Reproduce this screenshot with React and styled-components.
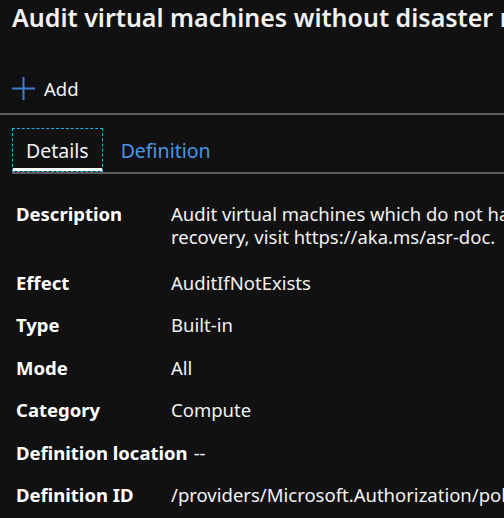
import React from "react";
import styled, { createGlobalStyle } from "styled-components";

const Global = createGlobalStyle`
  html, body { margin: 0; padding: 0; background: #111111; }
  body { font-family: "Segoe UI", "Noto Sans", "Open Sans", sans-serif; color: #ffffff; overflow: hidden; }
`;

const Page = styled.div`
  width: 504px;
  height: 518px;
  overflow: hidden;
  background: #111111;
`;

const Title = styled.h1`
  margin: 0;
  padding: 0 0 0 12px;
  font-size: 25px;
  font-weight: 600;
  line-height: 34px;
  white-space: nowrap;
  color: #f2f2f2;
`;

const Toolbar = styled.div`
  display: flex;
  align-items: center;
  height: 44px;
  margin-top: 35px;
  padding-left: 12px;
  border-bottom: 2px solid #5c5c5c;
`;

const ToolButton = styled.button`
  display: flex;
  align-items: center;
  gap: 9px;
  background: none;
  border: none;
  padding: 0;
  color: #f2f2f2;
  font: inherit;
  font-size: 18.5px;
  margin-top: -6px;
`;

const Tabs = styled.div`
  display: flex;
  margin: 13px 0 0 12px;
  border-bottom: 2px solid #5c5c5c;
`;

const Tab = styled.div`
  position: relative;
  height: 44px;
  display: flex;
  align-items: center;
  padding: 0 ${(p) => (p.$active ? "14px" : "4px")};
  font-size: 19.5px;
  color: ${(p) => (p.$active ? "#f2f2f2" : "#4a96e8")};
  box-sizing: border-box;
  outline: ${(p) => (p.$active ? "1px dashed #1fb2e8" : "none")};
  outline-offset: -1px;
  margin-right: 14px;
  &::after {
    content: "";
    display: ${(p) => (p.$active ? "block" : "none")};
    position: absolute;
    left: 1px;
    right: 1px;
    bottom: 1px;
    height: 3px;
    background: #ffffff;
  }
`;

const Details = styled.div`
  display: flex;
  flex-direction: column;
  margin: 28px 0 0 16px;
  gap: 19.5px;
  font-size: 18.5px;
  line-height: 23px;
`;

const Row = styled.div`
  display: flex;
  padding-bottom: ${(p) => (p.$multi ? "3px" : "0")};
`;

const Label = styled.div`
  flex: none;
  min-width: 149px;
  padding-right: 6px;
  font-weight: 700;
  color: #ffffff;
  white-space: nowrap;
`;

const Value = styled.div`
  color: #f2f2f2;
  white-space: nowrap;
`;

const rows = [
  ["Description", ["Audit virtual machines which do not have disaster", "recovery, visit https://aka.ms/asr-doc."]],
  ["Effect", ["AuditIfNotExists"]],
  ["Type", ["Built-in"]],
  ["Mode", ["All"]],
  ["Category", ["Compute"]],
  ["Definition location", ["--"]],
  ["Definition ID", ["/providers/Microsoft.Authorization/policyDefinitions/0015ea4d"]],
];

const PlusIcon = () => (
  <svg width="23" height="23" viewBox="0 0 23 23">
    <path d="M11.5 0V23M0 11.5H23" stroke="#3c80d6" strokeWidth="2" fill="none" />
  </svg>
);

export default function App() {
  return (
    <Page>
      <Global />
      <Title>Audit virtual machines without disaster recovery configured</Title>
      <Toolbar>
        <ToolButton>
          <PlusIcon />
          Add
        </ToolButton>
      </Toolbar>
      <Tabs>
        <Tab $active>Details</Tab>
        <Tab>Definition</Tab>
      </Tabs>
      <Details>
        {rows.map(([k, v]) => (
          <Row key={k} $multi={v.length > 1}>
            <Label>{k}</Label>
            <Value>
              {v.map((line, i) => (
                <div key={i}>{line}</div>
              ))}
            </Value>
          </Row>
        ))}
      </Details>
    </Page>
  );
}
